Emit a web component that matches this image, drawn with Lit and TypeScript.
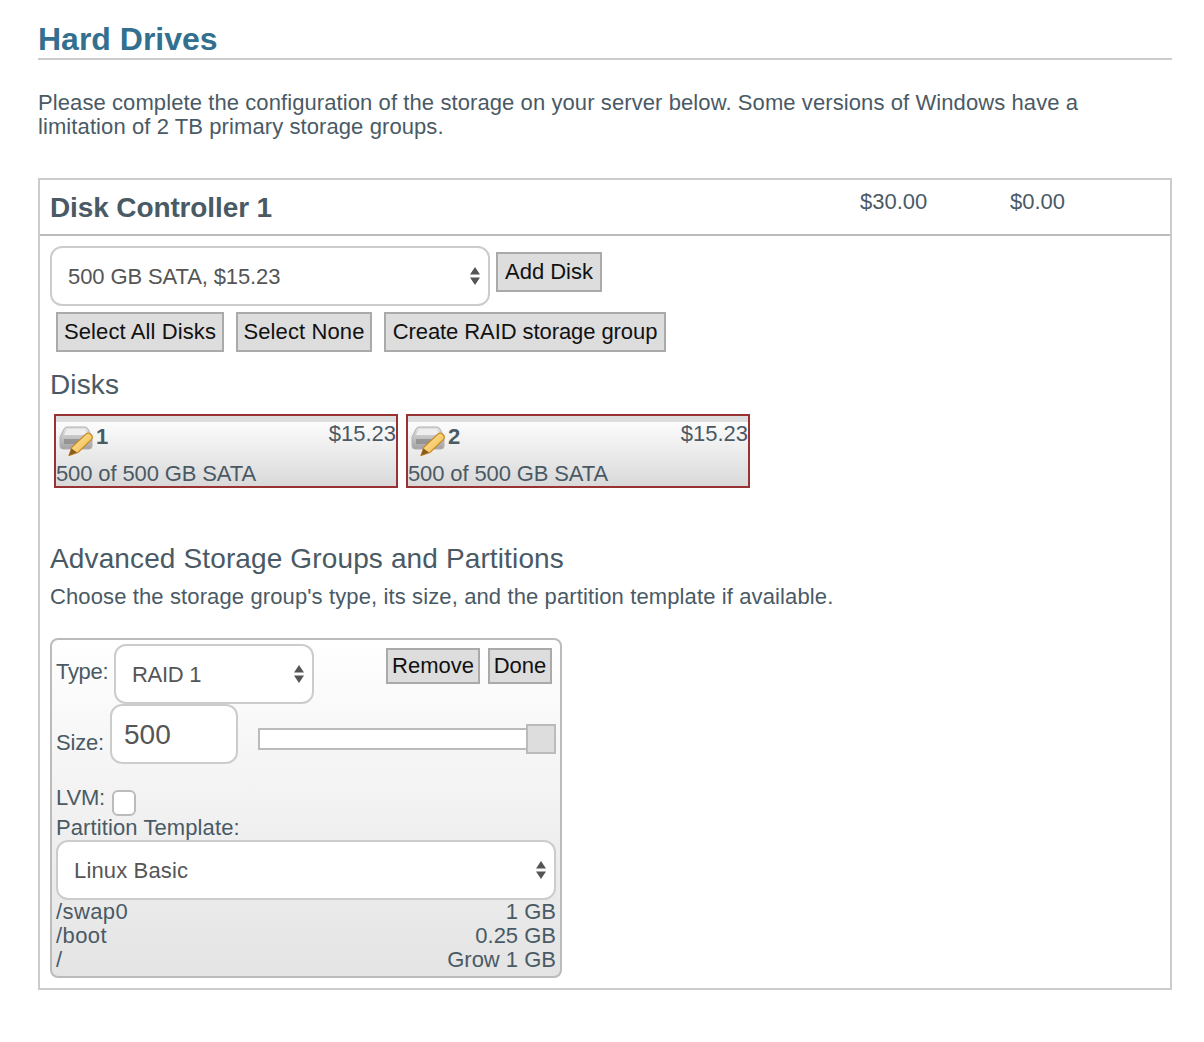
import { LitElement, html, css } from "lit";
import { customElement } from "lit/decorators.js";

const arrows = html`<svg class="arrows" width="12" height="20" viewBox="0 0 12 20"><path d="M6 1 L11 8.5 H1 Z M1 11.5 H11 L6 19 Z" fill="#555"/></svg>`;

const driveIcon = html`<svg class="drive" width="38" height="32" viewBox="0 0 38 32">
  <defs>
    <linearGradient id="dg" x1="0" y1="0" x2="0" y2="1"><stop offset="0" stop-color="#e2e2e2"/><stop offset="1" stop-color="#a2a2a2"/></linearGradient>
    <linearGradient id="pg" x1="0" y1="0" x2="1" y2="1"><stop offset="0" stop-color="#fdeaa6"/><stop offset="1" stop-color="#f0b540"/></linearGradient>
  </defs>
  <path d="M9 3 H27 Q29 3 30 5 L34 13 V22 Q34 25 31 25 H5 Q2 25 2 22 V13 L6 5 Q7 3 9 3 Z" fill="url(#dg)" stroke="#b0b0b0"/>
  <path d="M9 5 H27 L30 11 H6 Z" fill="#eeeeee"/>
  <rect x="6" y="15" width="24" height="5" fill="#8a8a8a" opacity=".75"/>
  <path d="M14 23 L28 10 Q30.5 8 33 10.5 Q35.5 13 33.5 15.5 L20 28.5 L11 31.5 Z" fill="url(#pg)" stroke="#c98a2a" stroke-width="1.2"/>
  <path d="M13.5 24.5 L19 28.5 L11 31.5 Z" fill="#8a5a20"/>
</svg>`;

@customElement("app-root")
export class AppRoot extends LitElement {
  static styles = css`
    :host {
      display: block;
      box-sizing: border-box;
      width: 1204px;
      height: 1042px;
      padding: 0 32px 0 38px;
      font-family: "Liberation Sans", Arial, sans-serif;
      font-size: 22px;
      line-height: 24px;
      color: #4a5a65;
      background: #fff;
    }
    * { box-sizing: border-box; }
    h2.title {
      margin: 0;
      height: 60px;
      padding-top: 20px;
      font-size: 32px;
      line-height: 38px;
      font-weight: bold;
      color: #33708f;
      border-bottom: 2px solid #ccc;
    }
    p.intro { margin: 31px 0 0; height: 48px; letter-spacing: 0.09px; padding-right: 60px; }
    .box { margin-top: 39px; height: 812px; border: 2px solid #ccc; }
    .box-head {
      display: flex;
      height: 56px;
      border-bottom: 2px solid #bbb;
      padding-left: 10px;
    }
    .box-head h3 {
      margin: 0;
      width: 810px;
      padding-top: 11px;
      font-size: 28px;
      line-height: 34px;
      font-weight: bold;
      letter-spacing: -0.12px;
    }
    .price { padding-top: 10px; }
    .p1 { width: 150px; }
    .box-body { padding: 10px 0 0 10px; }
    .sel {
      display: flex;
      align-items: center;
      justify-content: space-between;
      height: 60px;
      padding: 2px 7px 0 16px;
      background: #fff;
      border: 2px solid #ccc;
      border-radius: 12px;
      color: #555;
    }
    .main span { letter-spacing: -0.11px; }
    .type span { letter-spacing: -0.3px; }
    .tpl span { letter-spacing: 0.15px; }
    .arrows { flex: none; margin-top: -2px; }
    .row1 { display: flex; }
    .sel.main { width: 440px; }
    .btn {
      display: block;
      height: 40px;
      margin: 0;
      padding: 0;
      background: #ddd;
      border: 2px solid #aaa;
      font: inherit;
      color: #111;
      white-space: nowrap;
    }
    .add { margin: 6px 0 0 6px; width: 106px; }
    .row2 { display: flex; gap: 12px; margin: 6px 0 0 6px; }
    .b1 { width: 168px; letter-spacing: 0.1px; }
    .b2 { width: 136px; letter-spacing: 0.1px; }
    .b3 { width: 282px; letter-spacing: -0.08px; }
    .heading { margin: 0; font-size: 28px; font-weight: normal; line-height: 32px; color: #4a5a65; letter-spacing: 0.13px; }
    .disks-h { margin-top: 17px; }
    .disks { display: flex; gap: 8px; margin: 13px 0 0 4px; }
    .disk {
      width: 344px;
      height: 74px;
      border: 2px solid #933;
      background: linear-gradient(#fff, #d9d9d9);
    }
    .disk-band { height: 6px; background: #ddd; }
    .disk-top { display: flex; align-items: flex-start; height: 32px; }
    .drive { flex: none; margin: 2px 0 0 2px; }
    .num { font-weight: bold; margin-top: 3px; }
    .cost { margin-left: auto; margin-top: 0; }
    .disk-size { margin-top: 8px; letter-spacing: -0.12px; }
    .adv-h { margin-top: 55px; }
    .adv-d { margin: 10px 0 0; letter-spacing: 0.12px; }
    .panel {
      width: 512px;
      height: 340px;
      margin-top: 29px;
      padding: 4px 4px 0;
      border: 2px solid #bbb;
      border-radius: 8px;
      background: linear-gradient(#fff, #e4e4e4);
    }
    .p-type { display: flex; height: 60px; }
    .lbl-type { margin-top: 16px; width: 58px; letter-spacing: -0.3px; }
    .sel.type { width: 200px; }
    .p-btn { height: 36px; margin-top: 4px; padding: 0; }
    .remove { margin-left: 72px; width: 94px; }
    .done { margin-left: 8px; width: 64px; }
    .p-size { display: flex; height: 60px; }
    .lbl-size { margin-top: 27px; width: 54px; letter-spacing: -0.2px; }
    .num-input {
      width: 128px;
      height: 60px;
      padding: 1px 12px 0;
      background: #fff;
      border: 2px solid #ccc;
      border-radius: 12px;
      font: inherit;
      font-size: 28px;
      color: #555;
    }
    .track {
      position: relative;
      width: 270px;
      height: 22px;
      margin: 24px 0 0 20px;
      background: #fff;
      border: 2px solid #bbb;
    }
    .thumb {
      position: absolute;
      right: -30px;
      top: -6px;
      width: 30px;
      height: 30px;
      background: #ddd;
      border: 2px solid #bbb;
    }
    .p-lvm { display: flex; margin-top: 22px; height: 26px; }
    .lvm-label { width: 56px; letter-spacing: -0.2px; }
    .check {
      width: 24px;
      height: 26px;
      margin: 4px 0 0;
      flex: none;
      appearance: none;
      background: #fff;
      border: 2px solid #bbb;
      border-radius: 6px;
    }
    .pt { height: 26px; line-height: 32px; letter-spacing: 0.1px; }
    .sel.tpl { width: 500px; margin-top: 2px; }
    .part { display: flex; justify-content: space-between; }
    .part span:first-child { letter-spacing: 0.4px; }
  `;

  private disk(n: number) {
    return html`<div class="disk">
      <div class="disk-band"></div>
      <div class="disk-top">
        ${driveIcon}<span class="num">${n}</span><span class="cost">$15.23</span>
      </div>
      <div class="disk-size">500 of 500 GB SATA</div>
    </div>`;
  }

  render() {
    return html`
      <h2 class="title">Hard Drives</h2>
      <p class="intro">Please complete the configuration of the storage on your server below. Some versions of Windows have a limitation of 2 TB primary storage groups.</p>
      <div class="box">
        <div class="box-head">
          <h3>Disk Controller 1</h3>
          <div class="price p1">$30.00</div>
          <div class="price">$0.00</div>
        </div>
        <div class="box-body">
          <div class="row1">
            <div class="sel main"><span>500 GB SATA, $15.23</span>${arrows}</div>
            <button class="btn add">Add Disk</button>
          </div>
          <div class="row2">
            <button class="btn b1">Select All Disks</button>
            <button class="btn b2">Select None</button>
            <button class="btn b3">Create RAID storage group</button>
          </div>
          <h4 class="heading disks-h">Disks</h4>
          <div class="disks">${this.disk(1)}${this.disk(2)}</div>
          <h4 class="heading adv-h">Advanced Storage Groups and Partitions</h4>
          <p class="adv-d">Choose the storage group's type, its size, and the partition template if available.</p>
          <div class="panel">
            <div class="p-type">
              <span class="lbl-type">Type:</span>
              <div class="sel type"><span>RAID 1</span>${arrows}</div>
              <button class="btn p-btn remove">Remove</button>
              <button class="btn p-btn done">Done</button>
            </div>
            <div class="p-size">
              <span class="lbl-size">Size:</span>
              <input class="num-input" value="500" />
              <div class="track"><div class="thumb"></div></div>
            </div>
            <div class="p-lvm">
              <span class="lvm-label">LVM:</span>
              <input type="checkbox" class="check" />
            </div>
            <div class="pt">Partition Template:</div>
            <div class="sel tpl"><span>Linux Basic</span>${arrows}</div>
            <div class="parts">
              <div class="part"><span>/swap0</span><span>1 GB</span></div>
              <div class="part"><span>/boot</span><span>0.25 GB</span></div>
              <div class="part"><span>/</span><span>Grow 1 GB</span></div>
            </div>
          </div>
        </div>
      </div>
    `;
  }
}
